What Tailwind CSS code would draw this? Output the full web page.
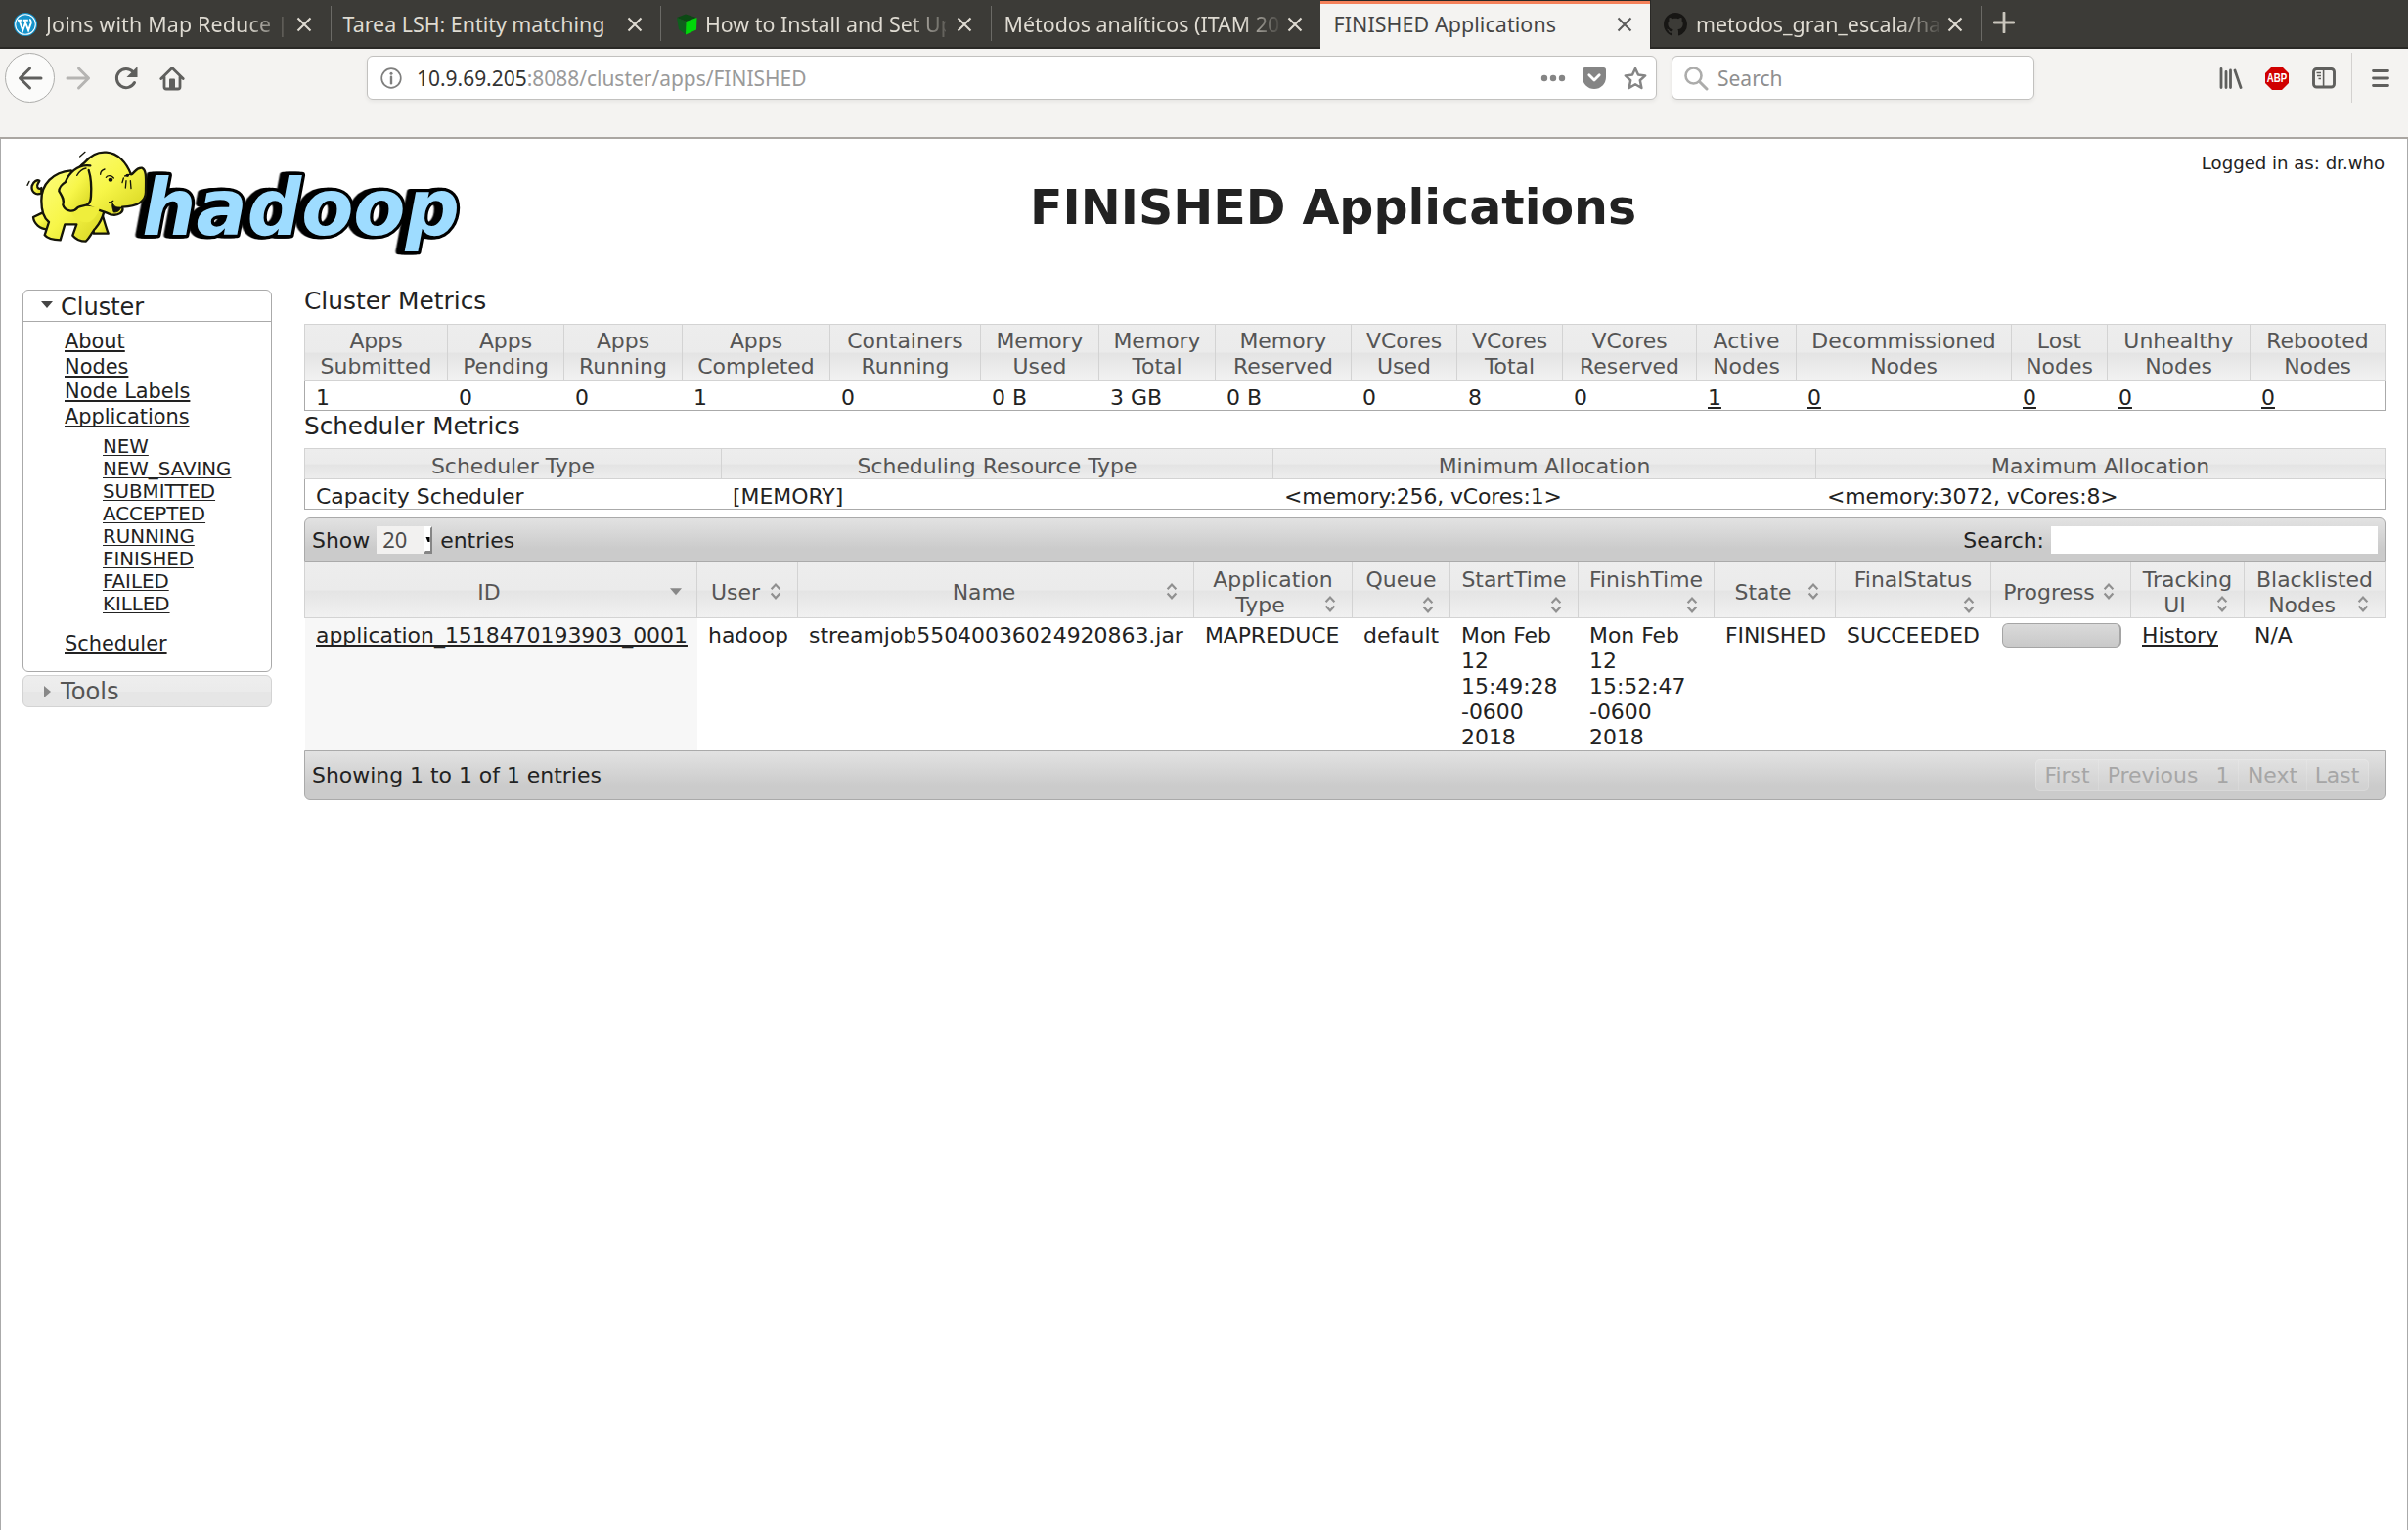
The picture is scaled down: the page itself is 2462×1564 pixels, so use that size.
<!DOCTYPE html>
<html lang="en">
<head>
<meta charset="utf-8">
<title>FINISHED Applications</title>
<script src="https://cdn.jsdelivr.net/npm/@tailwindcss/browser@4"></script>
</head>
<body class="w-[2462px] h-[1564px] overflow-hidden flex flex-col bg-white text-[#222] font-['DejaVu_Sans',sans-serif] text-[21.93px] leading-[26px] whitespace-nowrap">

<!-- shared icons -->
<svg class="hidden">
  <symbol id="close" viewBox="0 0 16 16"><path d="M1.5 1.5l13 13M14.5 1.5l-13 13" fill="none" stroke="currentColor" stroke-width="2.1"/></symbol>
  <symbol id="sort" viewBox="0 0 26 26"><path d="M8.6 10.3L13 5.6l4.4 4.7M8.6 14.6l4.4 4.7 4.4-4.7" fill="none" stroke="#909090" stroke-width="2.2"/></symbol>
  <symbol id="caret" viewBox="0 0 26 26"><path d="M8 9.3h12l-6 7z" fill="#888"/></symbol>
</svg>

<!-- tab strip -->
<div class="h-[50px] shrink-0 flex bg-[#3c3b37] font-['Noto_Sans',sans-serif] text-[21.4px] leading-[30px] text-[#dfdbd2]">
  <div class="w-[337.5px] flex items-center border-b-2 border-[#2a2926] pl-[14px] pr-[19px] pt-[2px]">
    <svg class="size-6 shrink-0 mr-[9px]" viewBox="0 0 24 24"><circle cx="12" cy="12" r="12" fill="#1593cb"/><circle cx="12" cy="12" r="10.3" fill="none" stroke="#fff" stroke-width="1.1"/><path d="M4 7.8h4.6M9.8 7.8h5M5.6 8l3.7 10.2L12 10.5M11.2 8l3.9 10.2 2.6-7.6c.6-2-1.2-2.6-.7-4.2" fill="none" stroke="#fff" stroke-width="1.9"/></svg>
    <div class="w-[248px] overflow-hidden tracking-[0.18px] [mask-image:linear-gradient(to_right,black_82%,transparent_102%)]">Joins with Map Reduce | S</div>
    <svg class="size-[16px] shrink-0 ml-auto"><use href="#close"/></svg>
  </div>
  <div class="w-[337.5px] flex items-center border-b-2 border-[#2a2926] pl-0 pr-[18px] pt-[2px]">
    <div class="w-px h-9 bg-[#6b6a66] -mt-[2px] mr-[12px]"></div>
    <div>Tarea LSH: Entity matching</div>
    <svg class="size-[16px] shrink-0 ml-auto"><use href="#close"/></svg>
  </div>
  <div class="w-[337.5px] flex items-center border-b-2 border-[#2a2926] pr-[19px] pt-[2px]">
    <div class="w-px h-9 bg-[#6b6a66] -mt-[2px] mr-[14px]"></div>
    <svg class="size-6 shrink-0 mr-[7px]" viewBox="0 0 24 24"><path d="M2 5l9-3.5L22 5l-10 4z" fill="#0b4a14"/><path d="M2 5l9.500 4-.500 13.500L4 17z" fill="#0f5f1d"/><path d="M11.500 9L22.500 5l-.5 12.500L11 22.500z" fill="#00d809"/></svg>
    <div class="w-[246px] overflow-hidden [mask-image:linear-gradient(to_right,black_84%,transparent_104%)]">How to Install and Set Up a</div>
    <svg class="size-[16px] shrink-0 ml-auto"><use href="#close"/></svg>
  </div>
  <div class="w-[337.5px] flex items-center border-b-2 border-[#2a2926] pr-[18px] pt-[2px]">
    <div class="w-px h-9 bg-[#6b6a66] -mt-[2px] mr-[13px]"></div>
    <div class="w-[282px] overflow-hidden [mask-image:linear-gradient(to_right,black_86%,transparent_101%)]">Métodos analíticos (ITAM 201</div>
    <svg class="size-[16px] shrink-0 ml-auto"><use href="#close"/></svg>
  </div>
  <div class="w-[337px] flex items-center bg-[#f4f3f1] text-[#454545] border-t border-[#2a2926] shadow-[inset_0_3px_0_#f5815a] pl-[13.5px] pr-[18px] pb-px">
    <div class="tracking-[0.1px]">FINISHED Applications</div>
    <svg class="size-[16px] shrink-0 ml-auto text-[#5c5c5c]"><use href="#close"/></svg>
  </div>
  <div class="w-[337.5px] flex items-center border-b-2 border-l border-[#2a2926] pl-[13px] pr-[18px] pt-[2px]">
    <svg class="size-6 shrink-0 mr-[9px]" viewBox="0 0 16 16"><path fill="#171614" d="M8 0C3.580 0 0 3.580 0 8c0 3.540 2.290 6.530 5.470 7.590.4.070.550-.170.550-.380 0-.190-.010-.820-.010-1.490-2.010.370-2.530-.490-2.690-.940-.090-.230-.480-.940-.820-1.130-.280-.150-.680-.520-.010-.530.630-.010 1.080.580 1.230.820.720 1.210 1.870.870 2.330.660.070-.520.280-.870.510-1.070-1.780-.2-3.640-.890-3.640-3.950 0-.870.310-1.590.820-2.150-.080-.2-.360-1.020.080-2.120 0 0 .670-.210 2.200.820.640-.180 1.320-.270 2-.270s1.360.090 2 .270c1.530-1.040 2.200-.820 2.200-.820.440 1.100.160 1.920.080 2.120.510.560.820 1.270.820 2.150 0 3.070-1.870 3.750-3.650 3.950.290.250.540.730.540 1.480 0 1.070-.010 1.930-.010 2.200 0 .210.150.460.550.380A8.010 8.010 0 0016 8c0-4.420-3.580-8-8-8z"/></svg>
    <div class="w-[248px] overflow-hidden [mask-image:linear-gradient(to_right,black_84%,transparent_102%)]">metodos_gran_escala/hado</div>
    <svg class="size-[16px] shrink-0 ml-auto"><use href="#close"/></svg>
  </div>
  <div class="flex-1 flex items-center border-b-2 border-[#2a2926]">
    <div class="w-px h-9 bg-[#6b6a66]"></div>
    <svg class="size-[22px] ml-[12px] -mt-[2px]" viewBox="0 0 22 22"><path d="M11 1v20M1 11h20" stroke="#c9c5bc" stroke-width="2.8" stroke-linecap="round"/></svg>
  </div>
</div>

<!-- navigation bar -->
<div class="h-[92px] shrink-0 flex items-start bg-[#f4f3f1] border-b-2 border-[#aaa6a2] pt-[4px] text-[#5c5c5c] font-['Noto_Sans',sans-serif] text-[21px] leading-[30px]">
  <div class="size-[51px] ml-[5px] rounded-full bg-[#fbfbfa] border border-[#adadab] flex items-center justify-center">
    <svg class="size-[26px]" viewBox="0 0 26 26"><path d="M24 13H2.500M12.500 3L2.500 13l10 10" fill="none" stroke="#5f5f5d" stroke-width="3" stroke-linecap="round" stroke-linejoin="round"/></svg>
  </div>
  <div class="h-[51px] flex items-center">
    <svg class="size-[26px] ml-[11px]" viewBox="0 0 26 26"><path d="M2 13h21.500M13.500 3l10 10-10 10" fill="none" stroke="#b5b4b2" stroke-width="3" stroke-linecap="round" stroke-linejoin="round"/></svg>
    <svg class="size-[26px] ml-[23px]" viewBox="0 0 26 26"><path d="M21.500 17.500A9.600 9.600 0 1 1 20 6.500" fill="none" stroke="#5f5f5d" stroke-width="3" stroke-linecap="round"/><path d="M24.500 1v11H13.500z" fill="#5f5f5d"/></svg>
    <svg class="size-[26px] ml-[21px]" viewBox="0 0 26 26"><path d="M1.800 13.500L13 2.500l11.200 11M5 11.500V22q0 2 2 2h12q2 0 2-2V11.500" fill="none" stroke="#5f5f5d" stroke-width="2.800" stroke-linecap="round" stroke-linejoin="round"/><path d="M10 24v-9.500q0-1 1-1h4q1 0 1 1V24z" fill="#5f5f5d"/></svg>
  </div>
  <div class="ml-[186px] mt-[3px] w-[1319px] h-[45px] rounded-[6px] bg-white border border-[#c2c1bf] shadow-[0_2px_4px_rgba(0,0,0,0.06)] flex items-center">
    <svg class="size-[22px] ml-[13px]" viewBox="0 0 22 22"><circle cx="11" cy="11" r="9.800" fill="none" stroke="#7f7f7e" stroke-width="1.700"/><path d="M11 9.800v6.400" stroke="#7f7f7e" stroke-width="2.400" stroke-linecap="round"/><circle cx="11" cy="6.200" r="1.500" fill="#7f7f7e"/></svg>
    <div class="ml-[15px] text-[20.95px] text-[#9a9a9a]"><span class="text-[#333]">10.9.69.205</span>:8088/cluster/apps/FINISHED</div>
    <svg class="w-[26px] h-[8px] ml-auto" viewBox="0 0 26 8"><g fill="#858585"><circle cx="4" cy="4" r="3.200"/><circle cx="13" cy="4" r="3.200"/><circle cx="22" cy="4" r="3.200"/></g></svg>
    <svg class="w-6 h-[22px] ml-[17px]" viewBox="0 0 24 22"><path d="M2.500 0h19Q24 0 24 2.500V10a12 12 0 0 1-24 0V2.500Q0 0 2.500 0z" fill="#858585"/><path d="M6.800 7.800L12 13l5.200-5.200" fill="none" stroke="#fff" stroke-width="2.800" stroke-linecap="round" stroke-linejoin="round"/></svg>
    <svg class="size-6 ml-[18px] mr-[9px]" viewBox="0 0 24 24"><path d="M12 2l3 6.600 7.200.8-5.400 4.900 1.600 7.700L12 18.200 5.600 22l1.600-7.700L1.800 9.400 9 8.600z" fill="none" stroke="#858585" stroke-width="2.500" stroke-linejoin="round"/></svg>
  </div>
  <div class="ml-[15px] mt-[3px] w-[371px] h-[45px] rounded-[6px] bg-white border border-[#c2c1bf] shadow-[0_2px_4px_rgba(0,0,0,0.06)] flex items-center">
    <svg class="size-[26px] ml-[11px]" viewBox="0 0 26 26"><circle cx="10.500" cy="10.500" r="8" fill="none" stroke="#acacab" stroke-width="2.600"/><path d="M16.500 16.500l7.500 7.500" stroke="#acacab" stroke-width="3" stroke-linecap="round"/></svg>
    <div class="ml-[9px] text-[#8f8f8f]">Search</div>
  </div>
  <div class="ml-auto h-[51px] flex items-center">
    <svg class="w-6 h-[22px] mr-[23px]" viewBox="0 0 24 22"><path d="M2 1.500v19M7 4.500v16M11.500 3v17.500M16 3l6 17.500" fill="none" stroke="#5f5f5d" stroke-width="2.800" stroke-linecap="round"/></svg>
    <svg class="size-6 mr-6" viewBox="0 0 24 24"><path d="M7 0h10l7 7v10l-7 7H7l-7-7V7z" fill="#d00000"/><text x="12" y="16.400" text-anchor="middle" font-family="Liberation Sans" font-weight="700" font-size="12.500" fill="#fff" textLength="20.500" lengthAdjust="spacingAndGlyphs">ABP</text></svg>
    <svg class="w-6 h-[22px]" viewBox="0 0 24 22"><rect x="1.500" y="1.500" width="21" height="18.500" rx="3" fill="none" stroke="#5f5f5d" stroke-width="2.900"/><path d="M11.600 2v18" stroke="#5f5f5d" stroke-width="1.600"/><path d="M4.500 5.500h4.500M5 8.500h4M6.500 11.500H9" stroke="#5f5f5d" stroke-width="1.400"/></svg>
    <div class="w-px h-[51px] bg-[#d3d1cf] ml-4"></div>
    <svg class="w-[18px] h-[20px] ml-5 mr-[19px]" viewBox="0 0 18 20"><path d="M1.500 2.500h15M1.500 10h15M1.500 17.500h15" stroke="#5f5f5d" stroke-width="2.800" stroke-linecap="round"/></svg>
  </div>
</div>

<!-- page -->
<div class="flex-1 flex flex-col border-x border-[#aaa]">
  <div class="h-[138px] flex items-start">
    <svg class="w-[499px] h-[138px]" viewBox="3 6 1497 414">
      <defs>
        <linearGradient id="skin" x1="0" y1="0" x2="1" y2="1"><stop offset="0" stop-color="#fdfd7c"/><stop offset=".5" stop-color="#f7f649"/><stop offset="1" stop-color="#d5d31e"/></linearGradient>
        <filter id="extrude" x="-10%" y="-10%" width="120%" height="120%">
          <feDropShadow dx="-8" dy="0" stdDeviation="0" flood-color="#000" result="a"/>
          <feDropShadow in="a" dx="-10" dy="0" stdDeviation="0" flood-color="#000"/>
        </filter>
      </defs>
      <text x="436" y="300" textLength="974" lengthAdjust="spacingAndGlyphs" font-family="DejaVu Sans" font-weight="700" font-style="italic" font-size="238" fill="#9edcff" stroke="#000" stroke-width="20" stroke-linejoin="round" paint-order="stroke" filter="url(#extrude)">hadoop</text>
      <g fill="url(#skin)" stroke="#15150a" stroke-width="7" stroke-linejoin="round" stroke-linecap="round">
        <path d="M127 172c-18 10-32-6-29-22 5-14 16-20 23-16-2 8-10 12-6 20 4 6 8 6 12 2z"/>
        <path d="M131 232l-29 14c2 20 20 36 44 37l8-20z"/>
        <path d="M312 232c6 20 12 42 20 64h-44l-8-40z"/>
        <path d="M218 103c-55 4-92 42-91 92 0 36 10 56 23 66l-13 40c8 10 28 15 48 15l14-48h36l-12 34c10 12 22 18 40 18 14-12 22-34 30-40 12-14 20-28 26-50z"/>
        <path d="M340 238c-30-12-60-20-100-40-30-40-10-100 20-120 20-24 40-33 66-31 36 2 62 32 76 68 10-2 14-22 33-20 16 6 12 38 12 74 0 28-24 44-72 46 6 16-12 28-35 23z"/>
        <path d="M244 206c20 8 46 6 62 10-4 18-16 36-30 44-30 10-62-20-60-40z" stroke="none" fill="#efee3c"/>
        <path d="M345 203c6 12 14 14 26 13-4 12-12 15-22 15-3-9-6-18-4-28z" fill="#111" stroke-width="3"/>
        <path d="M277 88c-42-6-68 28-76 50-10 6-20 18-20 28 8 14 18 26 12 42 6 20 32 26 46 8 18-10 38 2 40-34 2-30 0-58-7-80"/>
        <path d="M308 115c0-8 6-14 13-16M325 124c6-8 18-6 24 2M375 140l4-14M387 134l-2 22M400 134l2 24M405 112l-22 8M335 200q6 2 12-4M236 118c8-14 16-20 28-22M245 60l16-14M84 148l6-12" fill="none" stroke-width="4"/>
        <ellipse cx="339" cy="131" rx="7" ry="6" fill="#111" stroke="none"/>
        <ellipse cx="391" cy="118" rx="5" ry="5" fill="#111" stroke="none"/>
      </g>
    </svg>
    <h1 class="ml-[553px] mt-[43px] font-bold text-[49px] leading-[56px]">FINISHED Applications</h1>
    <div class="ml-auto mr-[23px] mt-[14px] text-[18.1px] leading-[22px]">Logged in as: dr.who</div>
  </div>

  <div class="flex items-start">
    <!-- sidebar -->
    <nav class="ml-[22px] mt-[16px] w-[255px] decoration-1 underline-offset-2 [text-decoration-skip-ink:none]">
      <div class="h-[391px] border border-[#aaa] rounded-[6px]">
        <div class="h-[32px] border-b border-[#aaa] flex items-center text-[24px] leading-[29px] pt-[3px]">
          <svg class="w-3 h-[7px] ml-[18px] mr-[8px] -mt-[5px]" viewBox="0 0 12 7"><path d="M0 0h12L6 7z" fill="#454545"/></svg>
          <span>Cluster</span>
        </div>
        <ul class="pl-[42px] pt-[8px] text-[20.9px] leading-[25.7px] underline">
          <li>About</li><li>Nodes</li><li>Node Labels</li><li>Applications</li>
        </ul>
        <ul class="pl-[81px] pt-[5px] text-[19.8px] leading-[23px] underline">
          <li>NEW</li><li>NEW_SAVING</li><li>SUBMITTED</li><li>ACCEPTED</li><li>RUNNING</li><li>FINISHED</li><li>FAILED</li><li>KILLED</li>
        </ul>
        <div class="pl-[42px] pt-[16px] text-[20.9px] underline">Scheduler</div>
      </div>
      <div class="mt-[3px] h-[33px] border border-[#d3d3d3] rounded-[6px] flex items-center text-[24.2px] leading-[29px] text-[#555] pt-px bg-linear-to-b from-[#eeeeee] from-0% via-[#ebebeb] via-50% to-[#e6e6e6] to-52%">
        <svg class="w-[7px] h-3 ml-[21px] mr-[10px]" viewBox="0 0 7 12"><path d="M0 0v12l7-6z" fill="#888"/></svg>
        <span>Tools</span>
      </div>
    </nav>

    <main class="ml-[33px] mt-[13px] w-[2128px]">
      <h2 class="text-[24.85px] leading-[29px] mb-[9px]">Cluster Metrics</h2>
      <div class="grid grid-cols-[147px_119px_121px_151px_154px_121px_119px_139px_108px_108px_137px_102px_220px_98px_146px_138px] h-[58px] border-y border-[#d3d3d3] text-center text-[#555] bg-[linear-gradient(#ededed_0%,#ebebeb_50%,#e4e4e4_52%,#f1f1f1_100%)] *:border-r *:border-[#d3d3d3] *:pt-1">
        <div class="border-l">Apps<br>Submitted</div><div>Apps<br>Pending</div><div>Apps<br>Running</div><div>Apps<br>Completed</div><div>Containers<br>Running</div><div>Memory<br>Used</div><div>Memory<br>Total</div><div>Memory<br>Reserved</div><div>VCores<br>Used</div><div>VCores<br>Total</div><div>VCores<br>Reserved</div><div>Active<br>Nodes</div><div>Decommissioned<br>Nodes</div><div>Lost<br>Nodes</div><div>Unhealthy<br>Nodes</div><div>Rebooted<br>Nodes</div>
      </div>
      <div class="grid grid-cols-[146px_119px_121px_151px_154px_121px_119px_139px_108px_108px_137px_102px_220px_98px_146px_137px] h-[31px] border border-t-0 border-[#aaa] *:pl-[11px] *:pt-[5px] decoration-1 underline-offset-2">
        <div>1</div><div>0</div><div>0</div><div>1</div><div>0</div><div>0 B</div><div>3 GB</div><div>0 B</div><div>0</div><div>8</div><div>0</div><div class="underline">1</div><div class="underline">0</div><div class="underline">0</div><div class="underline">0</div><div class="underline">0</div>
      </div>

      <h2 class="mt-px text-[24.65px] leading-[29px] mb-[8px]">Scheduler Metrics</h2>
      <div class="grid grid-cols-[427px_564px_555px_582px] h-[32px] border-y border-[#d3d3d3] text-center text-[#555] bg-[linear-gradient(#ededed_0%,#ebebeb_50%,#e4e4e4_54%,#ededed_100%)] *:border-r *:border-[#d3d3d3] *:pt-[5px]">
        <div class="border-l">Scheduler Type</div><div>Scheduling Resource Type</div><div>Minimum Allocation</div><div>Maximum Allocation</div>
      </div>
      <div class="grid grid-cols-[426px_564px_555px_581px] h-[31px] border border-t-0 border-[#aaa] *:pl-[11px] *:pt-[5px]">
        <div>Capacity Scheduler</div><div>[MEMORY]</div><div class="tracking-[-0.12px]">&lt;memory:256, vCores:1&gt;</div><div class="tracking-[-0.12px]">&lt;memory:3072, vCores:8&gt;</div>
      </div>

      <!-- applications table -->
      <div class="mt-[8px] h-[45px] border border-[#aaa] rounded-t-[6px] bg-[linear-gradient(#e2e2e2_0%,#cbcbcb_72%,#cbcbcb_100%)] flex items-center px-[7px]">
        <span class="pt-[2px]">Show</span>
        <div class="ml-[7px] w-[57px] h-[28px] bg-[#f2f1f0] flex items-center text-[#4c4c4c] font-['Noto_Sans',sans-serif] pl-[6px]">
          <span>20</span>
          <svg class="w-[9px] h-[28px] ml-auto" viewBox="0 0 9 28"><path d="M0 0h9L7 3v22H0z" fill="#fff"/><path d="M9 0v28H0l2-3h5V2z" fill="#858585"/><path d="M2.500 11h4v5h-2z" fill="#000"/></svg>
        </div>
        <span class="ml-[8px] pt-[2px]">entries</span>
        <span class="ml-auto pt-[2px]">Search:</span>
        <div class="ml-[7px] w-[334px] h-[28px] bg-white"></div>
      </div>
      <div class="grid grid-cols-[402px_103px_405px_162px_100px_131px_139px_124px_159px_143px_116px_144px] h-[58px] border-y border-[#d3d3d3] text-center text-[#555] bg-[linear-gradient(#ededed_0%,#ebebeb_50%,#e4e4e4_52%,#f1f1f1_100%)] *:border-r *:border-[#d3d3d3] *:pt-[5px] *:px-[9.5px]">
        <div class="border-l flex items-center"><span class="flex-1 pl-[2px]">ID</span><svg class="size-[26px] -mt-[3px]"><use href="#caret"/></svg></div>
        <div class="flex items-center"><span class="flex-1 pl-[2px]">User</span><svg class="size-[26px] -mt-[3px]"><use href="#sort"/></svg></div>
        <div class="flex items-center"><span class="flex-1 pl-[2px]">Name</span><svg class="size-[26px] -mt-[3px]"><use href="#sort"/></svg></div>
        <div>Application<div class="flex"><span class="flex-1">Type</span><svg class="size-[26px] -mt-px"><use href="#sort"/></svg></div></div>
        <div>Queue<svg class="size-[26px] ml-auto"><use href="#sort"/></svg></div>
        <div><div class="-mx-2">StartTime</div><svg class="size-[26px] ml-auto"><use href="#sort"/></svg></div>
        <div><div class="-mx-2">FinishTime</div><svg class="size-[26px] ml-auto"><use href="#sort"/></svg></div>
        <div class="flex items-center"><span class="flex-1 pl-[2px]">State</span><svg class="size-[26px] -mt-[3px]"><use href="#sort"/></svg></div>
        <div>FinalStatus<svg class="size-[26px] ml-auto"><use href="#sort"/></svg></div>
        <div class="flex items-center"><span class="flex-1 pl-[2px]">Progress</span><svg class="size-[26px] -mt-[3px]"><use href="#sort"/></svg></div>
        <div>Tracking<div class="flex"><span class="flex-1">UI</span><svg class="size-[26px] -mt-px"><use href="#sort"/></svg></div></div>
        <div>Blacklisted<div class="flex"><span class="flex-1">Nodes</span><svg class="size-[26px] -mt-px"><use href="#sort"/></svg></div></div>
      </div>
      <div class="grid grid-cols-[402px_103px_405px_162px_100px_131px_139px_124px_159px_143px_116px_144px] h-[135px] *:pl-[11px] *:pt-[5px] decoration-1 underline-offset-2 [text-decoration-skip-ink:none]">
        <div class="ml-px bg-[#f7f7f7] underline">application_1518470193903_0001</div>
        <div>hadoop</div>
        <div>streamjob55040036024920863.jar</div>
        <div class="tracking-[-0.12px]">MAPREDUCE</div>
        <div>default</div>
        <div>Mon Feb<br>12<br>15:49:28<br>-0600<br>2018</div>
        <div>Mon Feb<br>12<br>15:52:47<br>-0600<br>2018</div>
        <div>FINISHED</div>
        <div>SUCCEEDED</div>
        <div><div class="w-[122px] h-[25px] rounded-[6px] border border-[#a5a5a5] border-r-2 bg-linear-to-b from-[#dadada] to-[#c9c9c9]"></div></div>
        <div class="underline">History</div>
        <div class="-ml-px">N/A</div>
      </div>
      <div class="h-[51px] border border-[#aaa] rounded-b-[6px] bg-[linear-gradient(#e2e2e2_0%,#cbcbcb_72%,#cbcbcb_100%)] flex items-center justify-between pl-[7px] pr-[16px]">
        <span class="pt-px">Showing 1 to 1 of 1 entries</span>
        <div class="h-[33px] w-[341px] flex items-center rounded-[5px] bg-white/15 border border-white/15 text-center text-[#a6a6a6] *:h-full *:pt-[3px]">
          <span class="w-[63px]">First</span><span class="w-[111px] border-l border-white/15">Previous</span><span class="w-[32px] border-l border-white/15">1</span><span class="w-[70px] border-l border-white/15">Next</span><span class="w-[62px] border-l border-white/15">Last</span>
        </div>
      </div>
    </main>
  </div>
</div>
</body>
</html>
